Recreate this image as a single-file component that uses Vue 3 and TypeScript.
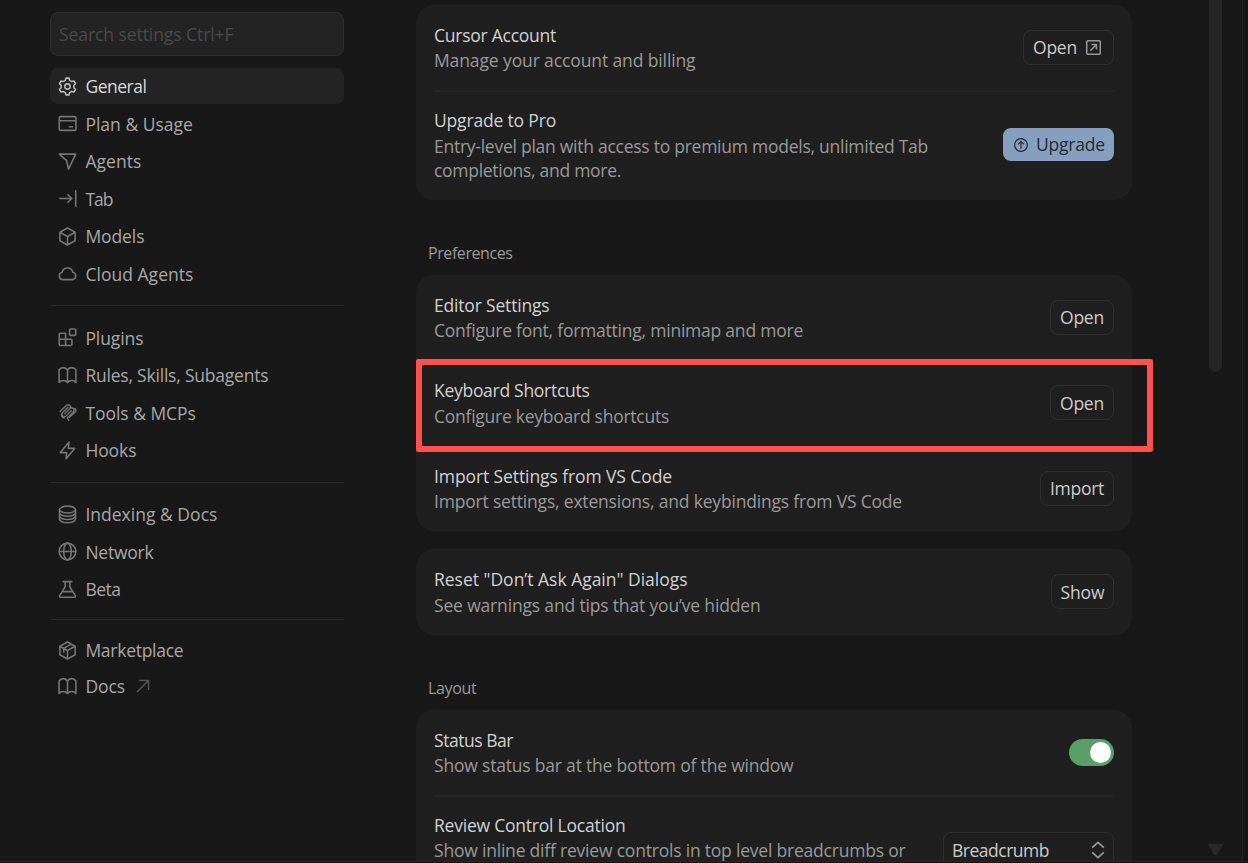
<script setup lang="ts">
import { nextTick, onMounted } from 'vue'

interface NavItem { label: string; icon: string; width: number; active?: boolean; external?: boolean }
interface Row {
  title: string
  titleWidth: number
  lines: { text: string; width: number }[]
  control: 'button' | 'link' | 'upgrade' | 'toggle' | 'select'
  label?: string
  labelWidth?: number
  controlWidth: number
}
interface Section { name: string; heading?: string; headingWidth?: number; rows: Row[] }

/* 18x18 stroke icons */
const icons: Record<string, string> = {
  gear: '<g transform="translate(9 9)"><path d="M-1.500-7.900h3L2-5.800 4.020-4.630 6.090-5.250 7.590-2.650 6.020-1.170V1.170L7.590 2.650 6.090 5.250 4.020 4.630 2 5.800 1.500 7.900h-3L-2 5.800-4.020 4.630-6.090 5.250-7.590 2.650-6.020 1.170V-1.170L-7.590-2.650-6.090-5.250-4.020-4.630-2-5.800z"/><circle r="2.500"/></g>',
  card: '<rect x="1.200" y="2.500" width="15.800" height="13" rx="1"/><path d="M1.200 6.400h15.800M10.200 12h4"/>',
  agent: '<path d="M1.200 2h15.600L10 16.300 8.200 8.200z"/>',
  tab: '<path d="M1.200 9h11.600M9 5l4 4-4 4M16.800 1.300v15.400"/>',
  cube: '<path d="M9 1 16.200 5v8L9 17l-7.200-4V5zM1.800 5 9 9l7.200-4M9 9v8"/>',
  cloud: '<path d="M4.700 14.800h8.800a3.500 3.500 0 0 0 .6-6.900 5.200 5.200 0 0 0-10.200 0 3.500 3.500 0 0 0 .8 6.900z"/>',
  plugins: '<path d="M2.200 5h5v11.500h-5a1 1 0 0 1-1-1V6a1 1 0 0 1 1-1zM1.200 10.700h11a1 1 0 0 1 1 1v3.800a1 1 0 0 1-1 1h-5"/><rect x="11" y="1" width="5.800" height="6" rx="1"/>',
  book: '<path d="M9 4C8 2.200 6.700 1.500 5 1.500 3.200 1.500 2 2.200 1 3.700v12c1-1.300 2.300-1.900 4-1.900s3 .6 4 1.900c1-1.300 2.300-1.900 4-1.900s3 .6 4 1.900v-12C16 2.200 14.800 1.500 13 1.500S10 2.200 9 4zM9 4v11.700"/>',
  mcp: '<path d="m1.500 8.500 6.700-6.300a2.200 2.200 0 0 1 3.100 3.100L6 10.500m5.300-5.200a2.200 2.200 0 0 1 3.200 3.100l-5.700 5.700 1.700 2.700M9.800 3.800 4.500 9a2.200 2.200 0 0 0 3.200 3.200L13 6.900M3.500 10.500c-.8 2 .8 4 3 3.500M14.500 5.300c2.200-.6 3.200 1.900 1.600 3.400L10.300 14" stroke-width="1.300"/>',
  bolt: '<path d="M10.300 1.100 2.200 11h6L7.700 16.900 15.800 7h-6z"/>',
  database: '<ellipse cx="9" cy="4.300" rx="7.600" ry="3.200"/><path d="M1.400 4.300v9.300c0 1.800 3.400 3.200 7.600 3.200s7.600-1.400 7.600-3.200V4.300M1.400 7.400c0 1.800 3.400 3.200 7.600 3.200s7.600-1.400 7.600-3.200M1.400 10.500c0 1.800 3.400 3.200 7.600 3.200s7.600-1.400 7.600-3.200"/>',
  globe: '<circle cx="9" cy="9" r="7.900"/><ellipse cx="9" cy="9" rx="3.600" ry="7.900"/><path d="M1.100 9h15.800"/>',
  flask: '<path d="M4.300 1.500h9.400M6.800 1.500v5L1.700 14.600q-.8 1.800.7 1.800h13.200q1.500 0 .7-1.800L11.200 6.500v-5M4.300 11h9.400"/>',
  package: '<path d="M9 1 16.200 5v8L9 17l-7.200-4V5zM1.800 5 9 9l7.200-4M9 9v8M12.600 3 5.400 7v4.200"/>',
}

const groups: NavItem[][] = [
  [
    { label: 'General', icon: 'gear', width: 61, active: true },
    { label: 'Plan & Usage', icon: 'card', width: 107.5 },
    { label: 'Agents', icon: 'agent', width: 56 },
    { label: 'Tab', icon: 'tab', width: 27 },
    { label: 'Models', icon: 'cube', width: 59 },
    { label: 'Cloud Agents', icon: 'cloud', width: 108 },
  ],
  [
    { label: 'Plugins', icon: 'plugins', width: 58 },
    { label: 'Rules, Skills, Subagents', icon: 'book', width: 183 },
    { label: 'Tools & MCPs', icon: 'mcp', width: 110.5 },
    { label: 'Hooks', icon: 'bolt', width: 51 },
  ],
  [
    { label: 'Indexing & Docs', icon: 'database', width: 132 },
    { label: 'Network', icon: 'globe', width: 68 },
    { label: 'Beta', icon: 'flask', width: 35 },
  ],
  [
    { label: 'Marketplace', icon: 'package', width: 98 },
    { label: 'Docs', icon: 'book', width: 39.5, external: true },
  ],
]

const sections: Section[] = [
  {
    name: 'account',
    rows: [
      { title: 'Cursor Account', titleWidth: 122, lines: [{ text: 'Manage your account and billing', width: 261.5 }], control: 'link', label: 'Open', labelWidth: 44, controlWidth: 91 },
      {
        title: 'Upgrade to Pro', titleWidth: 122,
        lines: [
          { text: 'Entry-level plan with access to premium models, unlimited Tab', width: 494 },
          { text: 'completions, and more.', width: 187 },
        ],
        control: 'upgrade', label: 'Upgrade', labelWidth: 69, controlWidth: 111,
      },
    ],
  },
  {
    name: 'preferences', heading: 'Preferences', headingWidth: 84.5,
    rows: [
      { title: 'Editor Settings', titleWidth: 115.5, lines: [{ text: 'Configure font, formatting, minimap and more', width: 369 }], control: 'button', label: 'Open', labelWidth: 44, controlWidth: 64 },
      { title: 'Keyboard Shortcuts', titleWidth: 155.5, lines: [{ text: 'Configure keyboard shortcuts', width: 235 }], control: 'button', label: 'Open', labelWidth: 44, controlWidth: 64 },
      { title: 'Import Settings from VS Code', titleWidth: 238, lines: [{ text: 'Import settings, extensions, and keybindings from VS Code', width: 468 }], control: 'button', label: 'Import', labelWidth: 54, controlWidth: 74 },
    ],
  },
  {
    name: 'dialogs',
    rows: [
      { title: 'Reset "Don’t Ask Again" Dialogs', titleWidth: 253.5, lines: [{ text: 'See warnings and tips that you’ve hidden', width: 326.5 }], control: 'button', label: 'Show', labelWidth: 44, controlWidth: 63 },
    ],
  },
  {
    name: 'layout', heading: 'Layout', headingWidth: 48.5,
    rows: [
      { title: 'Status Bar', titleWidth: 79, lines: [{ text: 'Show status bar at the bottom of the window', width: 359.5 }], control: 'toggle', controlWidth: 45 },
      { title: 'Review Control Location', titleWidth: 191.5, lines: [{ text: 'Show inline diff review controls in top level breadcrumbs or', width: 471.5 }], control: 'select', label: 'Breadcrumb', labelWidth: 97, controlWidth: 171 },
    ],
  },
]

/* Spreads a label's letters over its column width. */
function fit(el: HTMLElement, width: number) {
  el.style.letterSpacing = '0px'
  const count = (el.textContent ?? '').length
  const natural = el.getBoundingClientRect().width
  el.style.letterSpacing = `${(width - natural) / count}px`
}
const fitted: [HTMLElement, number][] = []
const vFit = {
  mounted(el: HTMLElement, binding: { value: number }) {
    fitted.push([el, binding.value])
    fit(el, binding.value)
  },
}
onMounted(async () => {
  await nextTick()
  await document.fonts.ready
  fitted.forEach(([el, width]) => fit(el, width))
})
</script>

<template>
  <div class="window">
    <aside class="sidebar">
      <div class="search"><span v-fit="174.5">Search settings Ctrl+F</span></div>
      <nav v-for="(group, g) in groups" :key="g" class="group" :class="'group-' + g">
        <a v-for="item in group" :key="item.label" class="item" :class="{ active: item.active }">
          <svg class="icon" viewBox="0 0 18 18" v-html="icons[item.icon]"></svg>
          <span v-fit="item.width">{{ item.label }}</span>
          <svg v-if="item.external" class="external" viewBox="0 0 14 14"><path d="M1 13 12.500 1.500M3 1.500h9.500V11" /></svg>
        </a>
      </nav>
    </aside>

    <main class="content">
      <section v-for="section in sections" :key="section.name" class="section" :class="section.name">
        <h2 v-if="section.heading" class="heading"><span v-fit="section.headingWidth!">{{ section.heading }}</span></h2>
        <div class="card">
          <div v-for="row in section.rows" :key="row.title" class="row">
            <div class="copy">
              <div class="title"><span v-fit="row.titleWidth">{{ row.title }}</span></div>
              <div v-for="line in row.lines" :key="line.text" class="description"><span v-fit="line.width">{{ line.text }}</span></div>
            </div>
            <div class="control" :class="row.control" :style="{ width: row.controlWidth + 'px' }">
              <svg v-if="row.control === 'upgrade'" class="up" viewBox="0 0 16 16"><circle cx="8" cy="8" r="6.400" /><path d="M8 11.800V4.600M5 7.400l3-3 3 3" /></svg>
              <span v-if="row.label" v-fit="row.labelWidth!">{{ row.label }}</span>
              <svg v-if="row.control === 'link'" class="launch" viewBox="0 0 15 15"><rect x=".75" y=".75" width="13.500" height="13.500" rx="1" /><path d="M4.300 10.700 10.200 4.800M5.500 4.600h4.900v4.900" /></svg>
              <svg v-if="row.control === 'select'" class="chevrons" viewBox="0 0 14 18"><path d="m1.200 6.700 5.800-5.400 5.800 5.400M1.200 11.300 7 16.700l5.800-5.400" /></svg>
              <i v-if="row.control === 'toggle'" class="knob"></i>
            </div>
          </div>
        </div>
      </section>
      <div class="highlight"></div>
    </main>

    <div class="scrollbar">
      <div class="thumb"></div>
      <svg class="arrow" viewBox="0 0 15 12"><path d="M1.500 0h12q2 0 1 1.700L9 10.500q-1.500 2-3 0L.5 1.700Q-.500 0 1.500 0z" /></svg>
    </div>
    <div class="edge"></div>
    <div class="bottom"></div>
  </div>
</template>

<style>
html,
body {
  margin: 0;
  background: #181818;
  overflow: hidden;
}
</style>

<style scoped>
.window {
  position: relative;
  display: flex;
  box-sizing: border-box;
  width: 1248px;
  height: 863px;
  overflow: hidden;
  background: #181818;
  color: #cccccc;
  font: 17.5px/25px "Open Sans", "Noto Sans", sans-serif;
  white-space: nowrap;
}
svg {
  display: block;
  flex: none;
  fill: none;
  stroke: currentColor;
  stroke-width: 1.5;
  stroke-linejoin: round;
}
.sidebar {
  flex: none;
  width: 294px;
  padding: 12px 0 0 50px;
}
.search {
  display: flex;
  align-items: center;
  box-sizing: border-box;
  height: 44px;
  padding-left: 8px;
  margin-bottom: 12px;
  border: 1px solid #2e2e2e;
  border-radius: 8px;
  background: #232323;
  color: #4a4a4a;
}
.group {
  display: flex;
  flex-direction: column;
  gap: 1.5px;
}
.group-1,
.group-2 {
  margin-top: 13px;
  padding-top: 14px;
  border-top: 1px solid #282828;
}
.group-2 {
  margin-top: 14px;
  padding-top: 13px;
}
.group-3 {
  gap: 0;
  margin-top: 12px;
  padding-top: 12px;
  border-top: 1px solid #282828;
}
.item {
  display: flex;
  align-items: center;
  box-sizing: border-box;
  height: 36px;
  padding: 1.2px 0 0 8px;
  border-radius: 8px;
  color: #a8a8a8;
}
.item.active {
  background: #242424;
  color: #dadada;
}
.icon {
  width: 19px;
  height: 19px;
  margin: -1px 8.4px 0 0;
  color: #757575;
}
.active .icon {
  color: #bbb;
}
.external {
  width: 14px;
  height: 14px;
  margin: -1px 0 0 11px;
  color: #555;
}
.content {
  position: relative;
  flex: none;
  width: 716px;
  padding: 5px 0 0 72px;
}
.preferences {
  margin-top: 40px;
}
.dialogs {
  margin-top: 18px;
}
.layout {
  margin-top: 40px;
}
.heading {
  height: 26px;
  margin: 0 0 9px;
  padding-left: 12px;
  color: #9a9a9a;
  font-size: 16px;
  font-weight: 400;
  line-height: 26px;
}
.card {
  border-radius: 18px;
  background: #1f1f1f;
  overflow: hidden;
}
.row {
  position: relative;
  display: flex;
  align-items: center;
  justify-content: space-between;
  box-sizing: border-box;
  height: 85.3px;
  padding: 0 18px;
}
.row + .row::before {
  content: "";
  position: absolute;
  top: 0;
  left: 18px;
  right: 18px;
  height: 2px;
  background: #242424;
}
.account .row:last-child,
.layout .row:last-child {
  height: 109.7px;
}
.dialogs .row {
  height: 86px;
}
.copy {
  padding-top: 0.6px;
}
.layout .row:last-child .copy {
  min-height: 74.3px;
}
.layout .row:last-child .control {
  margin-top: -1px;
}
.title {
  height: 25.3px;
  color: #d2d2d2;
}
.description {
  height: 24.5px;
  color: #9a9a9a;
}
.control {
  display: flex;
  align-items: center;
  justify-content: center;
  box-sizing: border-box;
  height: 35px;
  border: 1px solid #303030;
  border-radius: 8px;
}
.control.button {
  padding-top: 0.6px;
}
.control.link {
  justify-content: flex-start;
  padding-left: 9px;
}
.launch {
  width: 15px;
  height: 15px;
  margin-left: 9px;
  color: #999;
}
.control.upgrade {
  justify-content: flex-start;
  height: 33px;
  margin-top: -1.2px;
  padding-left: 10px;
  border: 0;
  background: #879fbe;
  color: #242a33;
}
.up {
  width: 16px;
  height: 16px;
  margin-right: 7px;
  stroke-width: 1.2;
}
.control.toggle {
  justify-content: flex-end;
  height: 27px;
  padding-right: 3px;
  border: 0;
  border-radius: 14px;
  background: #589f68;
}
.knob {
  width: 21px;
  height: 21px;
  border-radius: 50%;
  background: #fff;
}
.control.select {
  justify-content: space-between;
  padding: 1px 8px 0;
}
.chevrons {
  width: 14px;
  height: 18px;
  color: #999;
  stroke-width: 1.7;
}
.highlight {
  position: absolute;
  top: 359px;
  left: 72px;
  box-sizing: border-box;
  width: 737px;
  height: 93px;
  border: 6px solid #fe514e;
  border-radius: 2px;
}
.scrollbar {
  display: flex;
  flex-direction: column;
  justify-content: space-between;
  align-items: center;
  width: 15px;
  margin-left: 76px;
  padding-bottom: 7px;
}
.thumb {
  width: 13px;
  height: 372px;
  border-radius: 0 0 7px 7px;
  background: #252525;
}
.arrow {
  width: 15px;
  height: 12px;
  fill: #292929;
  stroke: none;
}
.edge {
  position: absolute;
  top: 0;
  right: 0;
  width: 5px;
  height: 863px;
  border-left: 1px solid #262626;
  background: #151515;
}
.bottom {
  position: absolute;
  bottom: 0;
  left: 0;
  width: 1248px;
  height: 1px;
  border-top: 1px solid #262626;
  background: #111;
}
</style>
